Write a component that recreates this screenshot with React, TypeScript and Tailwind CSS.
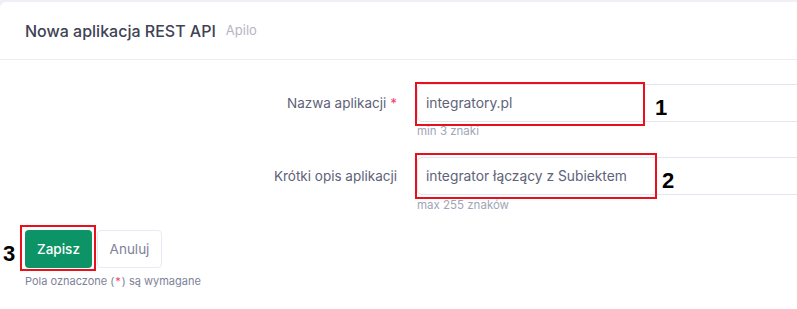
import React from "react";

export default function App() {
  return (
    <div className="w-[797px] h-[309px] overflow-hidden bg-[#eef0f6] pt-[2px]" style={{ fontFamily: "Inter, 'Open Sans', sans-serif" }}>
      <div className="w-[900px] h-[400px] bg-white rounded-tl-[6px]">
        <div className="h-[58px] border-b border-[#eceef3] flex items-center pl-[25px] gap-[10px]">
          <span className="text-[16px] text-[#3f4254] font-medium">Nowa aplikacja REST API</span>
          <span className="text-[13px] text-[#b5b5c3]">Apilo</span>
        </div>
        <div className="pt-[24px]">
          <div className="flex">
            <div className="w-[397px] h-[38px] flex items-center justify-end text-[13.5px] text-[#5e6278]">
              Nazwa aplikacji<span className="text-[#f1416c] ml-[4px]">*</span>
            </div>
            <div className="ml-[20px] flex-1">
              <div className="relative">
                <div className="h-[38px] border border-[#e4e6ef] rounded-[5px] flex items-center pl-[8px] text-[13.8px] text-[#5e6278]">
                  integratory.pl
                </div>
                <div className="absolute left-[-2px] top-[-2px] w-[230px] h-[44px] border-2 border-[#e8101a]" />
                <div className="absolute left-[238px] top-[7px] text-[22px] font-bold text-black" style={{ fontFamily: "'Liberation Sans', sans-serif" }}>1</div>
              </div>
              <div className="text-[11.5px] leading-[16px] mt-[1px] text-[#a1a5b7]">min 3 znaki</div>
            </div>
          </div>
          <div className="flex mt-[18px]">
            <div className="w-[397px] h-[38px] flex items-center justify-end text-[13.5px] text-[#5e6278]">
              Krótki opis aplikacji
            </div>
            <div className="ml-[20px] flex-1">
              <div className="relative">
                <div className="h-[38px] border border-[#e4e6ef] rounded-[5px] flex items-center pl-[8px] text-[13.8px] text-[#5e6278]">
                  integrator łączący z Subiektem
                </div>
                <div className="absolute left-[-2px] top-[-4px] w-[242px] h-[46px] border-2 border-[#e8101a]" />
                <div className="absolute left-[245px] top-[7px] text-[22px] font-bold text-black" style={{ fontFamily: "'Liberation Sans', sans-serif" }}>2</div>
              </div>
              <div className="text-[11.5px] leading-[16px] mt-[2px] text-[#a1a5b7]">max 255 znaków</div>
            </div>
          </div>
          <div className="mt-[17px] ml-[25px] flex gap-[5px] relative">
            <div className="absolute left-[-22px] top-[7px] text-[22px] font-bold text-black" style={{ fontFamily: "'Liberation Sans', sans-serif" }}>3</div>
            <div className="absolute left-[-5px] top-[-5px] w-[76px] h-[46px] border-2 border-[#e8101a]" />
            <button className="w-[67px] h-[38px] rounded-[4px] bg-[#0c9366] text-white text-[13.5px] font-medium">Zapisz</button>
            <button className="w-[65px] h-[38px] rounded-[4px] bg-white border border-[#e8ebf5] text-[#7e8299] text-[13.5px]">Anuluj</button>
          </div>
          <div className="ml-[25px] mt-[6px] text-[11px] leading-[14px] text-[#7e8299]">
            Pola oznaczone (<span className="text-[#f1416c] mx-[1px]">*</span>) są wymagane
          </div>
        </div>
      </div>
    </div>
  );
}
